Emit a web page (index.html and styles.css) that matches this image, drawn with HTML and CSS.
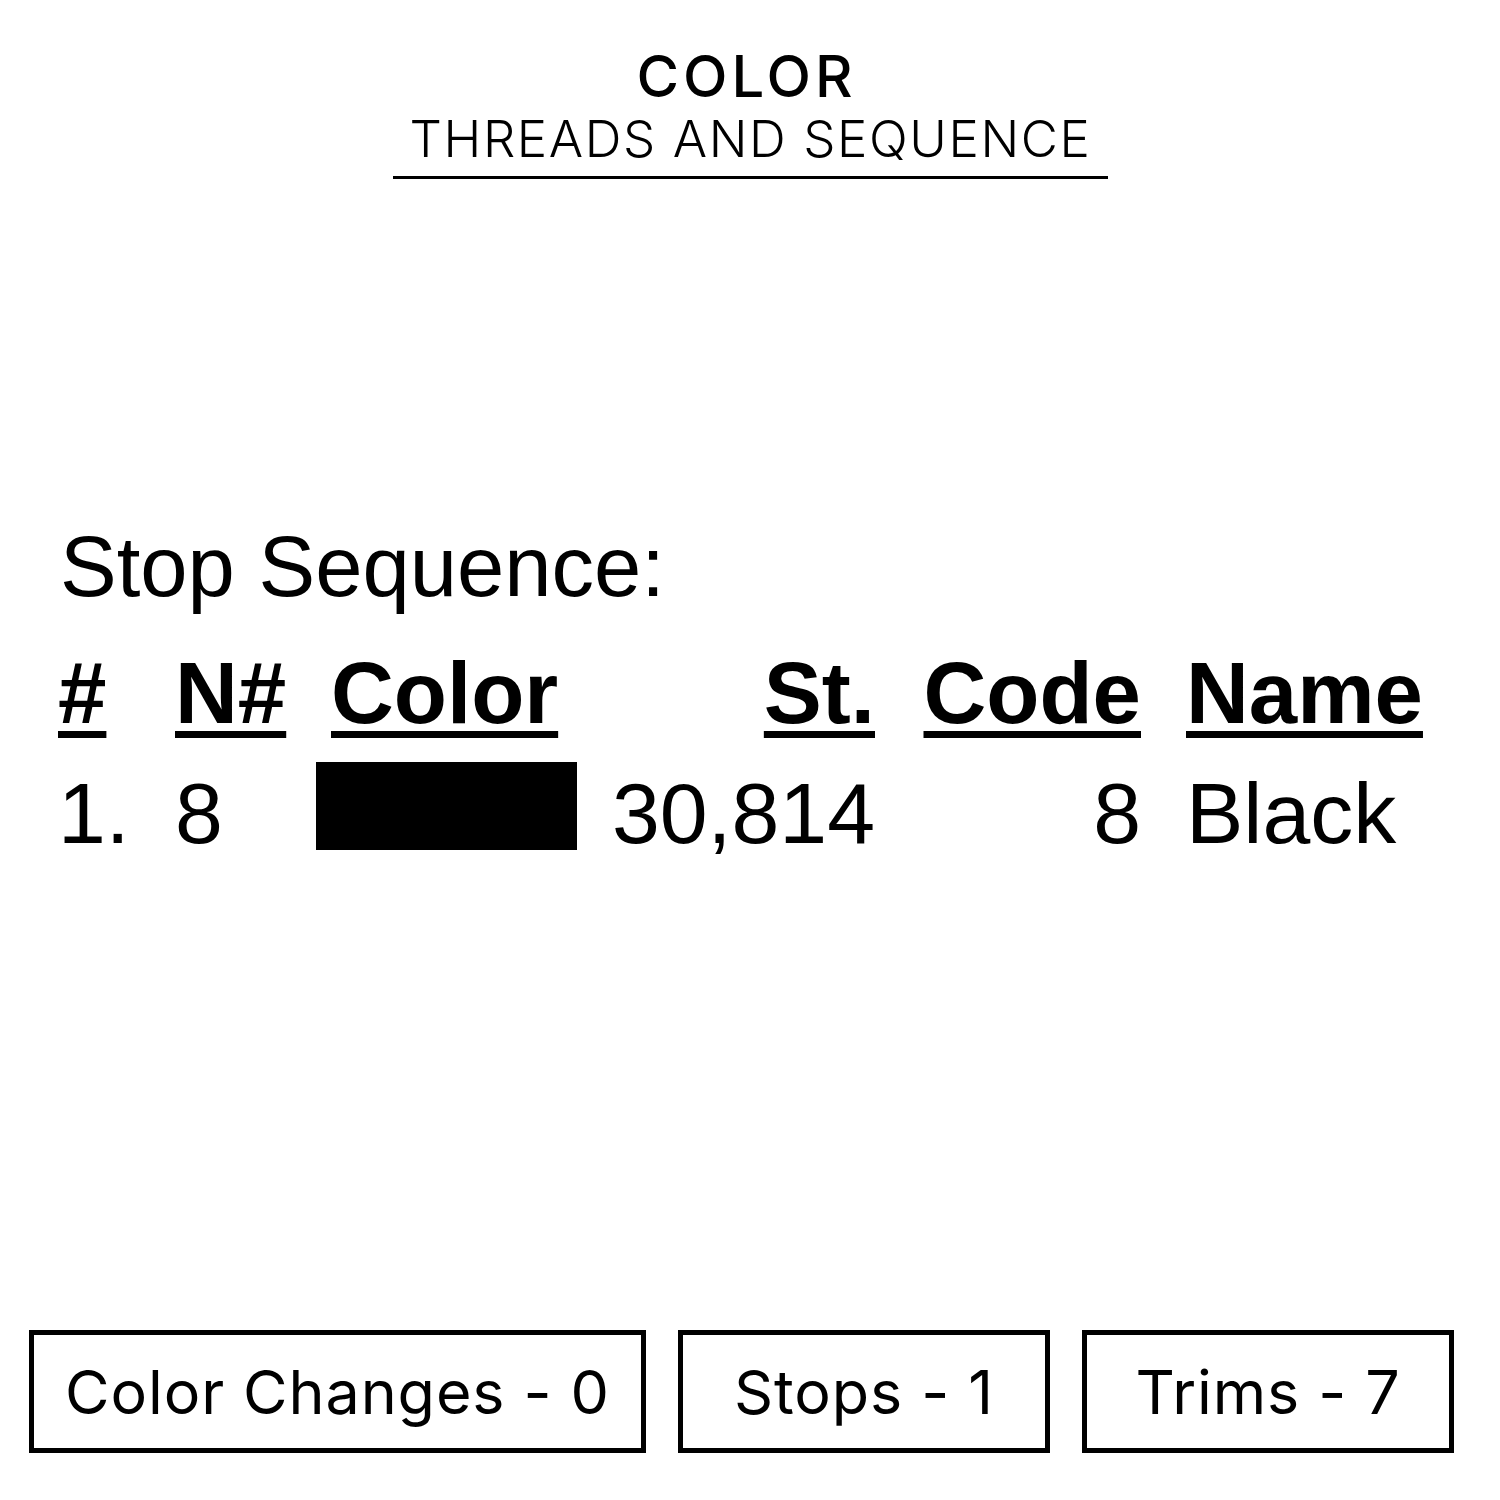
FILE: index.html
```html
<!DOCTYPE html>
<html lang="en">
<head>
<meta charset="utf-8">
<title>Color - Threads and Sequence</title>
<link rel="stylesheet" href="styles.css">
</head>
<body>
<div class="page">
  <header class="heading">
    <div class="heading-inner">
      <h1 class="title">COLOR</h1>
      <h2 class="subtitle">THREADS AND SEQUENCE</h2>
    </div>
  </header>

  <section class="sequence">
    <div class="seq-title">Stop Sequence:</div>
    <div class="seq-grid">
      <div class="th"><span class="u">#</span></div>
      <div class="th"><span class="u">N#</span></div>
      <div class="th"><span class="u">Color</span></div>
      <div class="th right"><span class="u">St.</span></div>
      <div class="th right"><span class="u">Code</span></div>
      <div class="th name"><span class="u">Name</span></div>

      <div class="td">1.</div>
      <div class="td">8</div>
      <div class="td"><div class="swatch"></div></div>
      <div class="td right">30,814</div>
      <div class="td right">8</div>
      <div class="td name">Black</div>
    </div>
  </section>

  <footer class="stats">
    <div class="stat stat-wide">Color Changes - 0</div>
    <div class="stat">Stops - 1</div>
    <div class="stat">Trims - 7</div>
  </footer>
</div>
</body>
</html>
```

FILE: styles.css
```css
html, body {
  margin: 0;
  padding: 0;
  background: #ffffff;
}

.page {
  width: 1500px;
  height: 1500px;
  display: flex;
  flex-direction: column;
  color: #000;
}

.heading {
  display: flex;
  justify-content: center;
  padding-top: 47px;
}

.heading-inner {
  width: 715px;
  margin-left: 1px;
  border-bottom: 3px solid #000;
  padding-bottom: 12px;
  text-align: center;
  font-family: Inter, "Open Sans", sans-serif;
}

.title {
  margin: 0;
  font-size: 58px;
  line-height: 1;
  font-weight: 500;
  letter-spacing: 4px;
  padding-right: 8px;
}

.subtitle {
  margin: 8px 0 0;
  font-size: 51px;
  line-height: 1;
  font-weight: 300;
  letter-spacing: 1.6px;
}

.sequence {
  margin-top: 345px;
  padding-left: 58px;
  font-family: "Liberation Sans", Arial, sans-serif;
}

.seq-title {
  font-size: 85px;
  line-height: 1;
  margin-left: 2px;
}

.seq-grid {
  margin-top: 40px;
  display: grid;
  grid-template-columns: 117px 156px 269px 275px 266px auto;
  row-gap: 35px;
  font-size: 86px;
  line-height: 1;
}

.th {
  font-weight: bold;
  font-size: 87px;
}

.u {
  text-decoration: underline;
  text-decoration-thickness: 7px;
  text-underline-offset: 8px;
}

.td {
  margin-top: -1px;
}

.right {
  text-align: right;
}

.name {
  padding-left: 45px;
}

.swatch {
  width: 261px;
  height: 88px;
  margin-left: -15px;
  margin-top: -8px;
  background: #000;
}

.stats {
  margin-top: auto;
  margin-bottom: 47px;
  padding-left: 29px;
  display: flex;
  gap: 32px;
}

.stat {
  box-sizing: border-box;
  width: 372px;
  height: 123px;
  border: 5px solid #000;
  display: flex;
  align-items: center;
  justify-content: center;
  font-family: Inter, "Open Sans", sans-serif;
  font-size: 61px;
  font-weight: 400;
  letter-spacing: 0.9px;
}

.stat-wide {
  width: 617px;
}
```
